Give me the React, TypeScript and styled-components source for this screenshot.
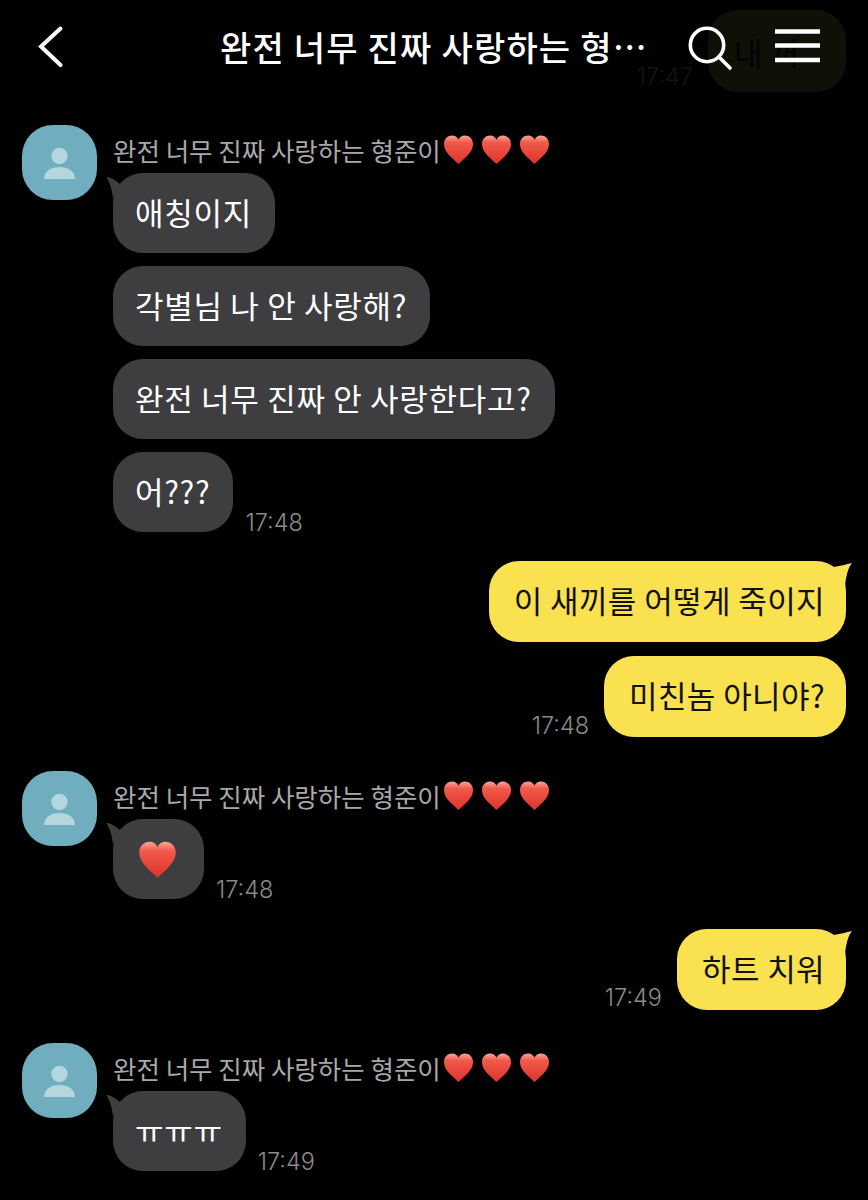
import React from "react";
import styled, { createGlobalStyle } from "styled-components";

const GlobalStyle = createGlobalStyle`
  html, body {
    margin: 0;
    padding: 0;
    background: #000;
  }
`;

const PageContainer = styled.div`
  position: relative;
  width: 868px;
  height: 1200px;
  overflow: hidden;
  box-sizing: border-box;
  padding: 10px 22px 0;
  background: #000;
  font-family: "Noto Sans CJK KR", "Noto Sans", sans-serif;
`;

const Header = styled.div`
  position: absolute;
  top: 0;
  left: 0;
  width: 100%;
  height: 94px;
`;

const BackIcon = styled.svg`
  position: absolute;
  left: 34px;
  top: 22px;
`;

const HeaderTitle = styled.div`
  position: absolute;
  left: 220px;
  top: 24px;
  color: #fff;
  font-size: 34px;
  line-height: 46px;
  font-weight: 500;
  white-space: nowrap;
  letter-spacing: 1.2px;
`;

const SearchIcon = styled.svg`
  position: absolute;
  left: 686px;
  top: 24px;
`;

const MenuIcon = styled.svg`
  position: absolute;
  left: 775px;
  top: 28px;
`;

const Row = styled.div<{ $top: number }>`
  display: flex;
  justify-content: flex-end;
  align-items: flex-end;
  gap: 15px;
  margin-top: ${({ $top }) => $top}px;
`;

const Group = styled.div<{ $top: number }>`
  display: grid;
  grid-template-columns: 75px 1fr;
  column-gap: 16px;
  margin-top: ${({ $top }) => $top}px;
`;

const Avatar = styled.div`
  width: 75px;
  height: 75px;
  border-radius: 31px;
  background: #6fadbf;
  display: flex;
  align-items: center;
  justify-content: center;
`;

const GroupBody = styled.div`
  display: flex;
  flex-direction: column;
  align-items: flex-start;
  gap: 13px;
`;

const SenderName = styled.div`
  display: flex;
  align-items: center;
  height: 48px;
  margin-bottom: -13px;
  color: #a8a8a8;
  font-size: 25.5px;
  white-space: nowrap;
`;

const Hearts = styled.span`
  display: flex;
  gap: 7px;
  margin-left: 2px;
`;

const MessageLine = styled.div`
  display: flex;
  align-items: flex-end;
  gap: 12px;
`;

const Bubble = styled.div<{ $mine?: boolean }>`
  position: relative;
  display: flex;
  align-items: center;
  box-sizing: border-box;
  height: ${({ $mine }) => ($mine ? 81 : 80)}px;
  padding: ${({ $mine }) => ($mine ? "0 21px 4px 25px" : "0 23px 4px 22px")};
  border-radius: 30px;
  background: ${({ $mine }) => ($mine ? "#fae150" : "#3e3e40")};
  color: ${({ $mine }) => ($mine ? "#111" : "#fff")};
  font-size: 31px;
  white-space: nowrap;
  letter-spacing: ${({ $mine }) => ($mine ? 0.4 : 0.7)}px;
`;

const BigHeart = styled.span`
  display: flex;
  padding: 4px 4px 0 3px;
`;

const GhostBubble = styled.div`
  display: flex;
  align-items: center;
  box-sizing: border-box;
  width: 138px;
  height: 82px;
  padding-left: 26px;
  border-radius: 30px;
  background: #100f08;
  color: #030303;
  font-size: 31px;
  letter-spacing: 0.7px;
  white-space: nowrap;
`;

const Time = styled.span<{ $ghost?: boolean; $drop?: number }>`
  margin-bottom: ${({ $drop }) => -($drop ?? 0)}px;
  font-family: "Inter", "Liberation Sans", sans-serif;
  font-size: 23.5px;
  font-weight: 300;
  line-height: 26px;
  color: ${({ $ghost }) => ($ghost ? "#141414" : "#8a8a8a")};
`;

const TailIn = styled.svg`
  position: absolute;
  left: -7px;
  top: 3px;
`;

const TailOut = styled.svg`
  position: absolute;
  right: -7px;
  top: 1px;
`;

const HeartIcon: React.FC<{ size?: number; id: string }> = ({ size = 31, id }) => (
  <svg width={size} height={size} viewBox="0 0 32 32">
    <defs>
      <linearGradient id={id} x1="0" y1="0" x2="0" y2="1">
        <stop offset="0" stopColor="#f9a698" />
        <stop offset="0.25" stopColor="#f0594b" />
        <stop offset="1" stopColor="#de3328" />
      </linearGradient>
    </defs>
    <path
      d="M16 31C11 26 1 19 1 10.5C1 5 5 1.5 9.5 1.5C12.5 1.5 15 3.2 16 6C17 3.2 19.5 1.5 22.5 1.5C27 1.5 31 5 31 10.5C31 19 21 26 16 31Z"
      fill={`url(#${id})`}
    />
  </svg>
);

const PersonIcon = () => (
  <svg width="75" height="75" viewBox="0 0 75 75">
    <circle cx="37.5" cy="31" r="8.2" fill="#b4d7df" />
    <path d="M22 54C22 46 29 42 37.5 42C46 42 53 46 53 54Z" fill="#b4d7df" />
  </svg>
);

const IncomingTail = () => (
  <TailIn width="24" height="24" viewBox="0 0 24 24">
    <path d="M0 1C4 1 8 3 14 8L7 22C6 14 4 6 0 1Z" fill="#3e3e40" />
  </TailIn>
);

const OutgoingTail = () => (
  <TailOut width="26" height="26" viewBox="0 0 26 26">
    <path d="M3 5C10 5 16 3 25 1C21 6 19 14 18 24Z" fill="#fae150" />
  </TailOut>
);

const Sender: React.FC<{ id: string; children: React.ReactNode; top: number }> = ({
  id,
  children,
  top,
}) => (
  <Group $top={top}>
    <Avatar>
      <PersonIcon />
    </Avatar>
    <GroupBody>
      <SenderName>
        완전 너무 진짜 사랑하는 형준이
        <Hearts>
          <HeartIcon id={`${id}-a`} />
          <HeartIcon id={`${id}-b`} />
          <HeartIcon id={`${id}-c`} />
        </Hearts>
      </SenderName>
      {children}
    </GroupBody>
  </Group>
);

const App: React.FC = () => {
  return (
    <PageContainer>
      <GlobalStyle />

      <Row $top={0}>
        <Time $ghost $drop={-2}>
          17:47
        </Time>
        <GhostBubble>내 꺼</GhostBubble>
      </Row>

      <Sender id="first" top={33}>
        <Bubble>
          <IncomingTail />
          애칭이지
        </Bubble>
        <Bubble>각별님 나 안 사랑해?</Bubble>
        <Bubble>완전 너무 진짜 안 사랑한다고?</Bubble>
        <MessageLine>
          <Bubble>어???</Bubble>
          <Time $drop={4}>17:48</Time>
        </MessageLine>
      </Sender>

      <Row $top={29}>
        <Bubble $mine>
          <OutgoingTail />이 새끼를 어떻게 죽이지
        </Bubble>
      </Row>
      <Row $top={14}>
        <Time $drop={2}>17:48</Time>
        <Bubble $mine>미친놈 아니야?</Bubble>
      </Row>

      <Sender id="second" top={34}>
        <MessageLine>
          <Bubble>
            <IncomingTail />
            <BigHeart>
              <HeartIcon id="second-big" size={39} />
            </BigHeart>
          </Bubble>
          <Time $drop={4}>17:48</Time>
        </MessageLine>
      </Sender>

      <Row $top={30}>
        <Time $drop={1}>17:49</Time>
        <Bubble $mine>
          <OutgoingTail />
          하트 치워
        </Bubble>
      </Row>

      <Sender id="third" top={33}>
        <MessageLine>
          <Bubble>
            <IncomingTail />
            ㅠㅠㅠ
          </Bubble>
          <Time $drop={4}>17:49</Time>
        </MessageLine>
      </Sender>

      <Header>
        <BackIcon width="34" height="48" viewBox="0 0 34 48">
          <path d="M26.5 6.5L7 24.5L26.5 43" fill="none" stroke="#fff" strokeWidth="4" strokeLinecap="round" />
        </BackIcon>
        <HeaderTitle>완전 너무 진짜 사랑하는 형…</HeaderTitle>
        <SearchIcon width="50" height="50" viewBox="0 0 50 50">
          <circle cx="21" cy="21" r="16.7" fill="none" stroke="#fff" strokeWidth="3.6" />
          <path d="M33 33L44 44" fill="none" stroke="#fff" strokeWidth="3.6" strokeLinecap="round" />
        </SearchIcon>
        <MenuIcon width="45" height="36" viewBox="0 0 45 36">
          <path d="M0 3.5H45M0 17.5H45M0 32H45" fill="none" stroke="#fff" strokeWidth="4.4" />
        </MenuIcon>
      </Header>
    </PageContainer>
  );
};

export default App;
